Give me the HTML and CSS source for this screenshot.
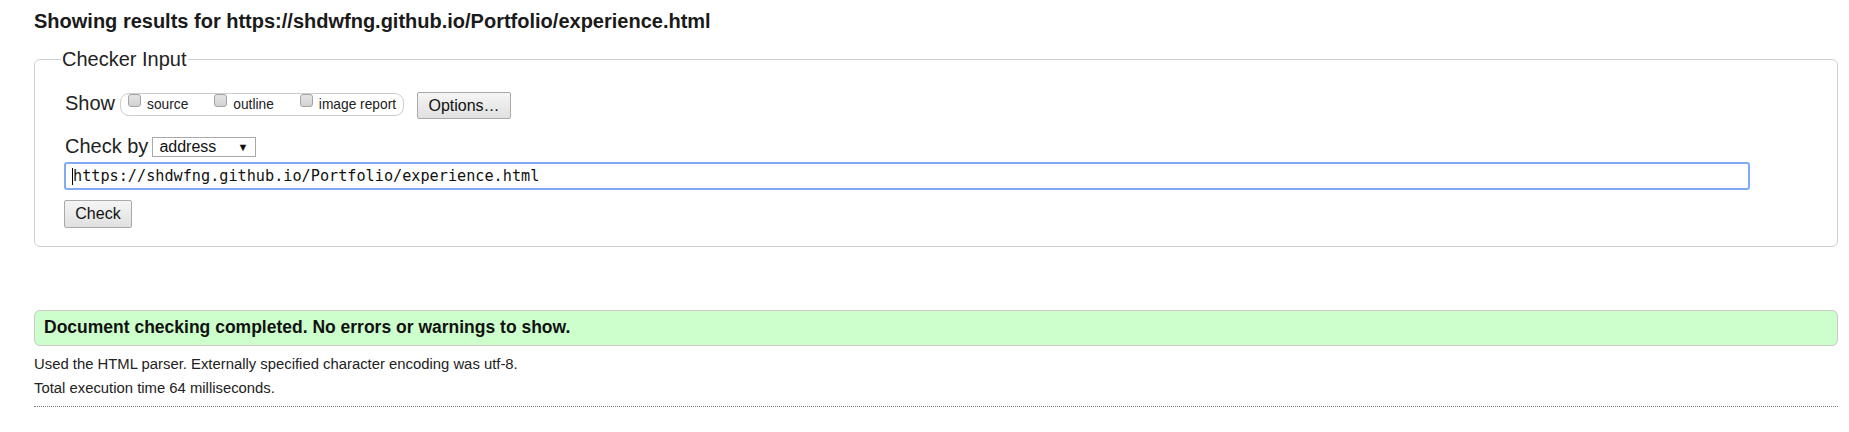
FILE: index.html
```html
<!DOCTYPE html>
<html lang="en">
<head>
<meta charset="utf-8">
<title>Nu Html Checker</title>
<link rel="stylesheet" href="styles.css">
</head>
<body>
<div class="page">
  <h2 class="results-title">Showing results for https://shdwfng.github.io/Portfolio/experience.html</h2>
  <form class="checker">
    <fieldset class="checker-input">
      <legend class="checker-legend">Checker Input</legend>
      <div class="row show-row">
        <span class="row-label">Show</span>
        <span class="toggles">
          <label class="toggle"><input class="box" type="checkbox"><span class="toggle-text">source</span></label>
          <label class="toggle"><input class="box" type="checkbox"><span class="toggle-text">outline</span></label>
          <label class="toggle"><input class="box" type="checkbox"><span class="toggle-text">image report</span></label>
        </span>
        <span class="btn options-btn">Options…</span>
      </div>
      <div class="row checkby-row">
        <span class="row-label">Check by</span>
        <span class="select"><span class="select-value">address</span><span class="select-arrow">▼</span></span>
      </div>
      <div class="url-field"><span class="caret"></span>https://shdwfng.github.io/Portfolio/experience.html</div>
      <div class="btn check-btn">Check</div>
    </fieldset>
  </form>
  <div class="success">Document checking completed. No errors or warnings to show.</div>
  <p class="detail">Used the HTML parser. Externally specified character encoding was utf-8.</p>
  <p class="detail">Total execution time 64 milliseconds.</p>
  <div class="dotted-rule"></div>
</div>
</body>
</html>
```
FILE: styles.css
```css
html, body {
  margin: 0;
  padding: 0;
  background: #fff;
}
body {
  font-family: "Liberation Sans", Arial, sans-serif;
  color: #222;
}
.page {
  padding: 0 11px 0 34px;
}
.results-title {
  margin: 0;
  padding-top: 10px;
  font-size: 20px;
  line-height: 23px;
  font-weight: bold;
  color: #1a1a1a;
}
.checker {
  margin: 15px 0 0 0;
}
.checker-input {
  margin: 0;
  border: 1px solid #cfcfcf;
  border-radius: 6px;
  padding: 21px 30px 18px 30px;
  min-width: 0;
}
.checker-legend {
  font-size: 20px;
  line-height: 23px;
  padding: 0 1px;
  margin-left: -4px;
  color: #222;
}
.row {
  display: flex;
  align-items: flex-start;
}
.row-label {
  font-size: 20px;
  line-height: 23px;
}
.toggles {
  display: flex;
  align-items: flex-start;
  box-sizing: border-box;
  height: 23px;
  margin: 1px 0 0 5px;
  padding: 0 7px 0 7px;
  border: 1px solid #cdcdcd;
  border-radius: 9px;
}
.toggle {
  display: flex;
  align-items: flex-start;
}
.toggle + .toggle {
  margin-left: 26px;
}
.box {
  -webkit-appearance: none;
  appearance: none;
  box-sizing: border-box;
  width: 13px;
  height: 13px;
  margin: 0 6px 0 0;
  border: 1px solid #a4a4a4;
  border-radius: 3px;
  background: linear-gradient(#e4e4e4, #d2d2d2);
}
.toggle-text {
  font-size: 13.75px;
  line-height: 21px;
  color: #222;
}
.btn {
  display: inline-flex;
  align-items: center;
  justify-content: center;
  box-sizing: border-box;
  height: 27px;
  font-size: 16px;
  color: #111;
  border: 1px solid #a9a9a9;
  border-radius: 2px;
  background: linear-gradient(#f5f5f5, #e0e0e0);
}
.options-btn {
  width: 94px;
  margin-left: 13px;
}
.checkby-row {
  margin-top: 16px;
}
.select {
  display: flex;
  align-items: center;
  justify-content: space-between;
  box-sizing: border-box;
  width: 104px;
  height: 20px;
  margin: 2px 0 0 4px;
  padding: 0 7px 0 6px;
  border: 1px solid #a9a9a9;
  background: #fff;
  font-size: 16px;
  color: #111;
}
.select-arrow {
  font-size: 11px;
  color: #111;
}
.url-field {
  display: flex;
  align-items: center;
  box-sizing: border-box;
  height: 28px;
  width: 1686px;
  margin: 4px 0 0 -1px;
  padding-left: 6px;
  border: 2px solid #7fabf5;
  border-radius: 3px;
  font-family: "DejaVu Sans Mono", "Liberation Mono", monospace;
  font-size: 15.2px;
  color: #111;
  background: #fff;
}
.caret {
  display: inline-block;
  width: 1px;
  height: 17px;
  background: #000;
  margin-right: 0;
}
.check-btn {
  width: 68px;
  height: 28px;
  margin: 10px 0 0 -1px;
}
.success {
  margin-top: 63px;
  padding: 6px 9px 8px 9px;
  border: 1px solid #c8c8c8;
  border-radius: 6px;
  background: #ccffcc;
  font-size: 17.5px;
  line-height: 20px;
  font-weight: bold;
  color: #111;
}
.detail {
  margin: 0;
  font-size: 14.85px;
  line-height: 24px;
  color: #222;
}
.success + .detail {
  margin-top: 6px;
}
.dotted-rule {
  margin-top: 6px;
  border-top: 1px dotted #7a7a7a;
}
```
